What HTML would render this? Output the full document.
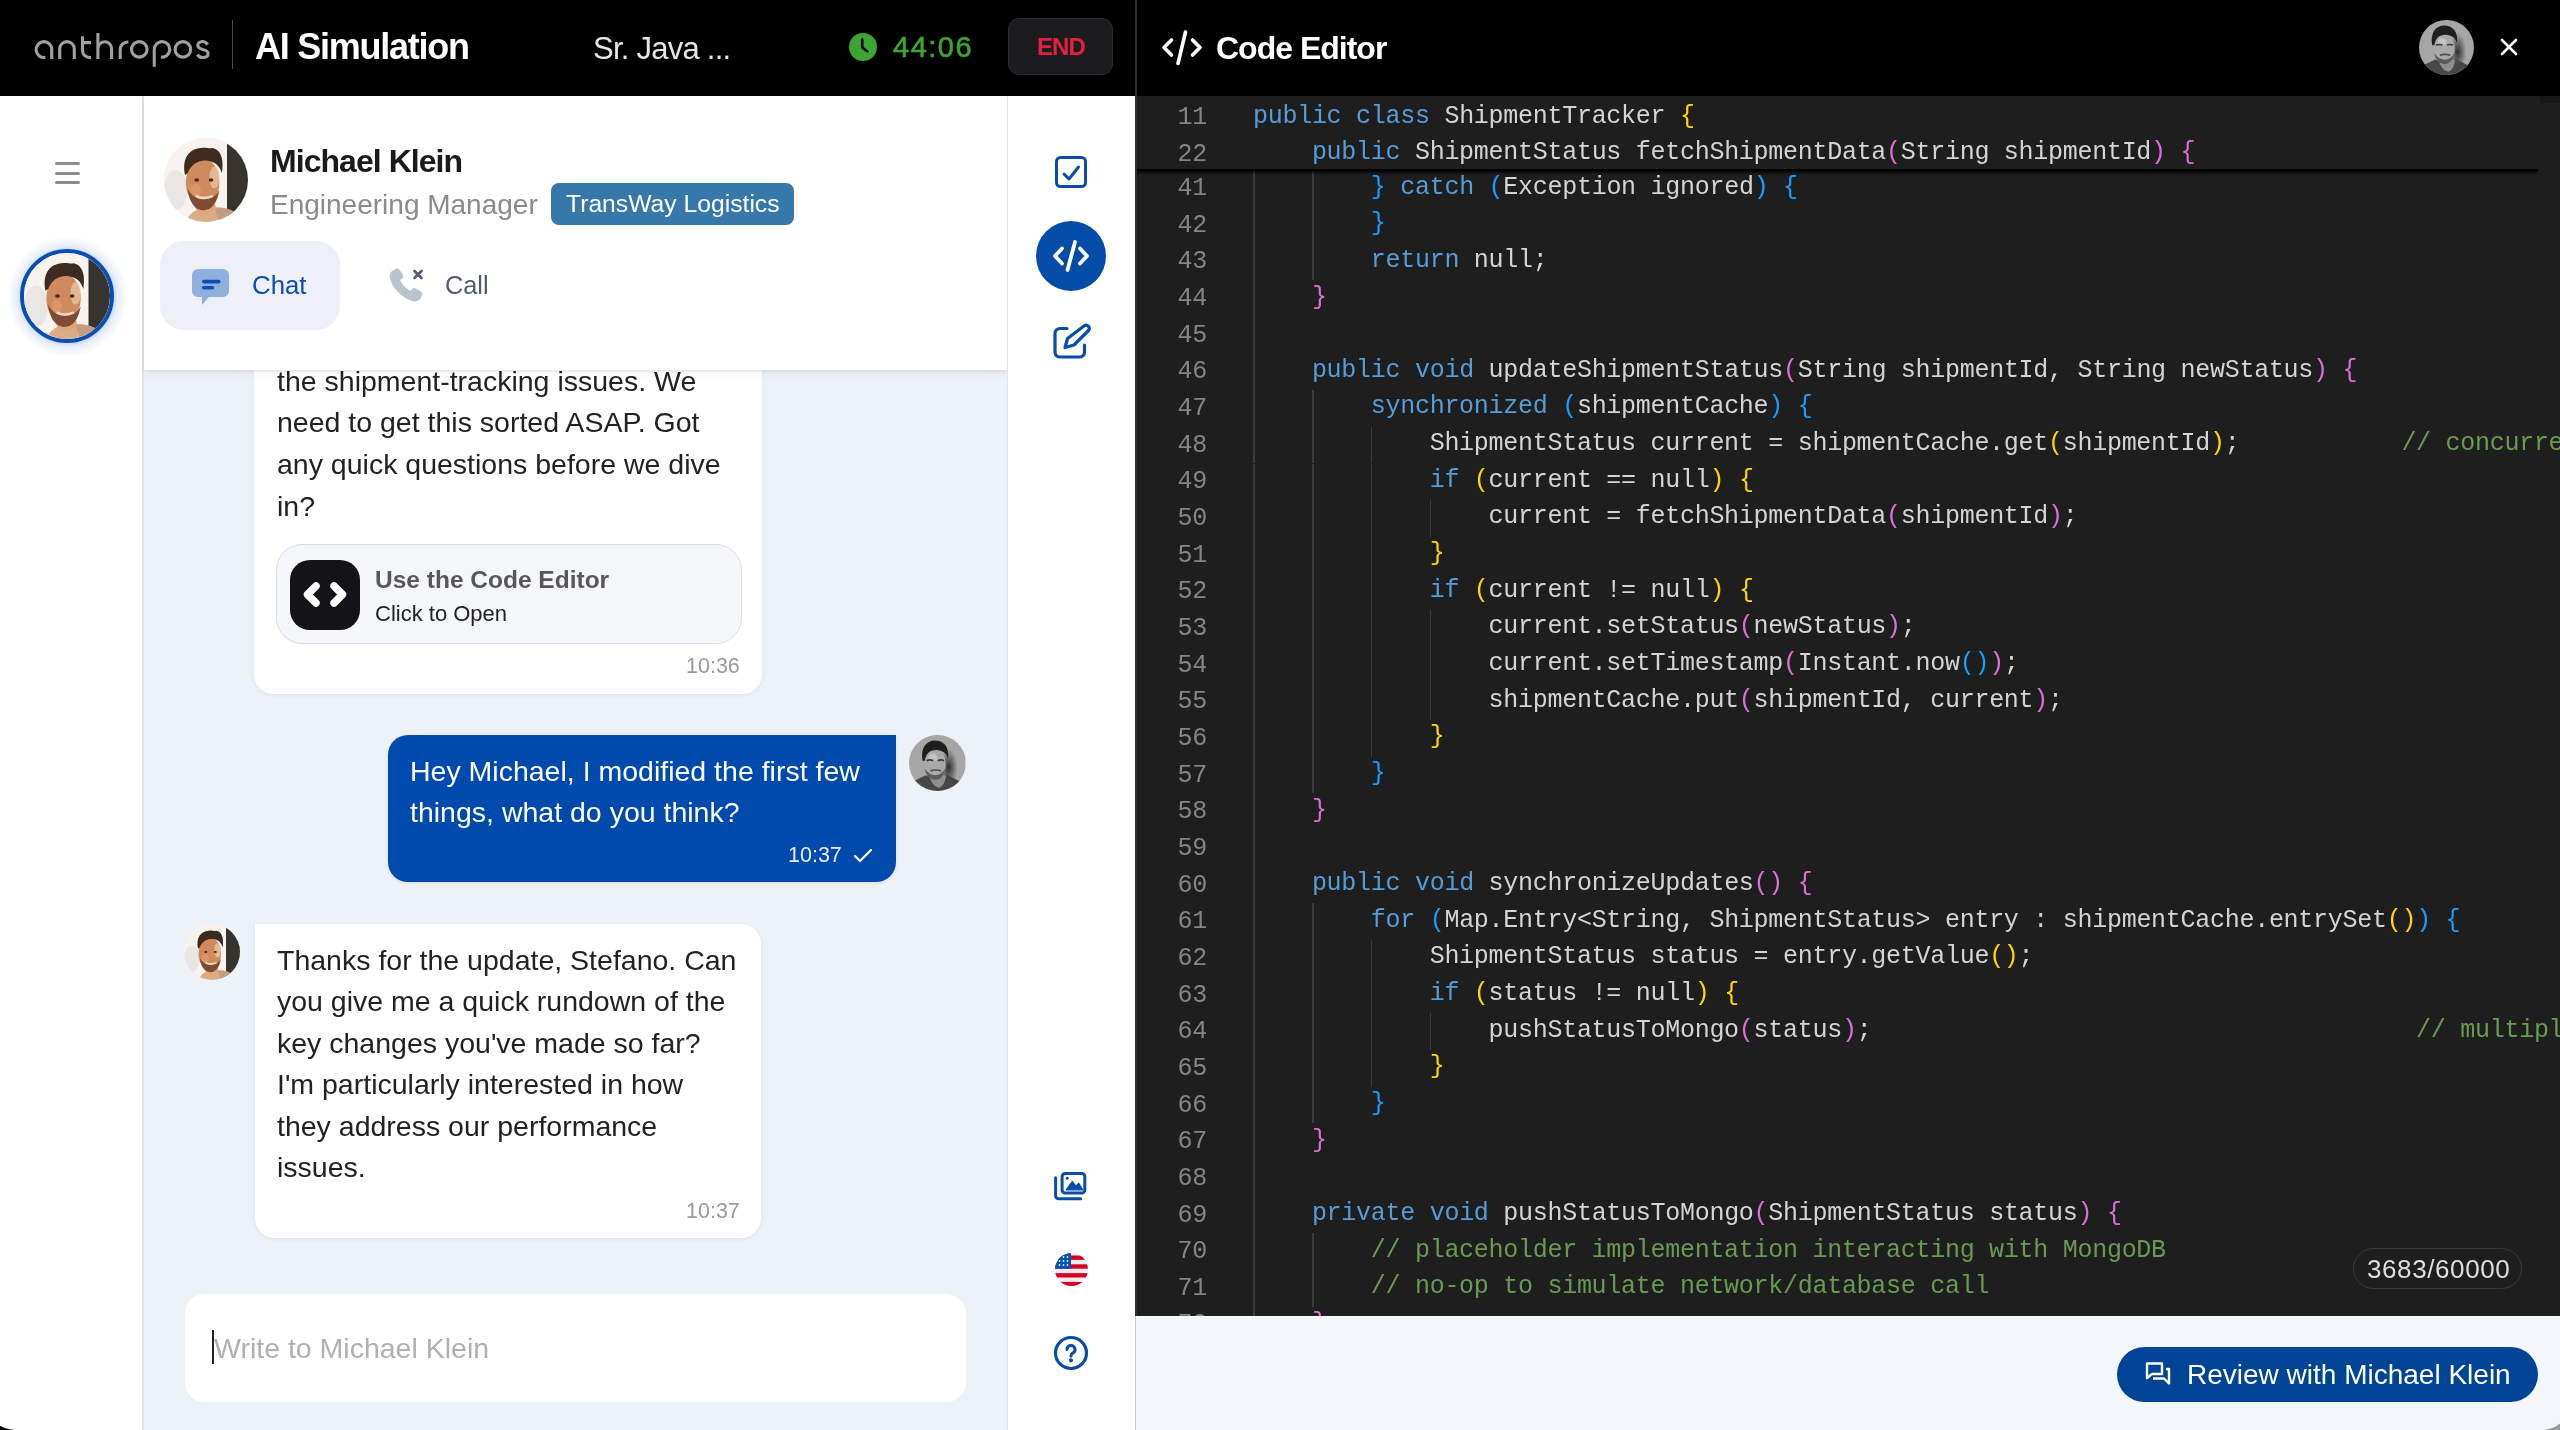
<!DOCTYPE html>
<html><head><meta charset="utf-8">
<style>
*{box-sizing:border-box;margin:0;padding:0}
html,body{width:2560px;height:1430px;overflow:hidden;background:#fff}
body{position:relative;font-family:"Liberation Sans",sans-serif;color:#222}
.a{position:absolute}
.t{position:absolute;line-height:1;white-space:nowrap;will-change:transform}
.b{font-weight:bold}
/* top bar */
#top{left:0;top:0;width:2560px;height:96px;background:#000}
/* left rail */
#rail{left:0;top:96px;width:142px;height:1334px;background:#fff}
#railb{left:142px;top:96px;width:2px;height:1334px;background:#e4e4e4}
/* chat column */
#chatbg{left:144px;top:96px;width:863px;height:1334px;background:#edf1f8}
#hdr{left:144px;top:96px;width:863px;height:274px;background:#fff;box-shadow:0 2px 3px rgba(0,0,0,0.07),0 5px 8px rgba(0,0,0,0.035)}
#rrail{left:1007px;top:96px;width:128px;height:1334px;background:#fff;border-left:1px solid #dfe2e6}
/* editor */
#ed{left:1137px;top:96px;width:1423px;height:1220px;background:#1e1e1e;overflow:hidden}
#edbar{left:1135px;top:1316px;width:1425px;height:114px;background:#f3f6fa;border-left:1.5px solid #c4c7cb;border-top:1px solid #fbfcfd}
#eddiv{left:1135px;top:0;width:2px;height:1316px;background:#2e2e2e}
.ln{position:absolute;left:0;width:70px;text-align:right;font-family:"Liberation Mono",monospace;font-size:25px;line-height:36.66px;color:#858585;letter-spacing:-0.28px;white-space:pre}
.cl{position:absolute;left:116px;font-family:"Liberation Mono",monospace;font-size:25px;line-height:36.66px;color:#d4d4d4;letter-spacing:-0.28px;white-space:pre}
.cl i{font-style:normal}
.cl,.ln{will-change:transform}
.k{color:#569cd6}
.c{color:#6a9955}
.g{position:absolute;width:1.4px;height:36.66px;background:#3b3b3b}
#sticky{position:absolute;left:0;top:0;width:1401px;height:72.7px;background:#1e1e1e}
#stsh{position:absolute;left:0;top:72.7px;width:1401px;height:6px;background:linear-gradient(180deg,rgba(0,0,0,0.95) 0,rgba(0,0,0,0.8) 35%,rgba(0,0,0,0.25) 70%,rgba(0,0,0,0) 100%)}
.bubble{position:absolute;background:#fff;border-radius:20px;box-shadow:0 1px 4px rgba(30,40,70,0.075)}
</style></head><body>

<!-- ================= TOP BAR ================= -->
<div id="top" class="a"></div>
<svg class="a" style="left:0;top:0" width="230" height="80" viewBox="0 0 230 80" fill="none" stroke="#a0a0a0" stroke-width="3.1">
  <path d="M51.7 48.5 V59 M51.9 49.5 A7.9 7.9 0 1 0 45.4 57.3"/>
  <path d="M59.7 59 V48.9 A7.3 7.3 0 0 1 74.3 48.9 V59"/>
  <path d="M82.5 36.3 V50.5 A7 7 0 0 0 89.5 57.45 H91 M81 42.65 H91"/>
  <path d="M97.9 33 V59 M97.9 48.6 A6.85 6.85 0 0 1 111.6 48.6 V59"/>
  <path d="M120.2 59 V49.5 A7.5 7.5 0 0 1 127.7 42 H128.4"/>
  <circle cx="139.3" cy="49.4" r="7.75"/>
  <path d="M154.25 66.8 V49.4 A7.75 7.75 0 1 1 160.9 57.05"/>
  <circle cx="182.9" cy="49.4" r="7.75"/>
  <path d="M207.6 44.6 C206.3 42.6 204.5 41.55 202.6 41.55 C199.6 41.55 197.8 43.3 197.8 45.6 C197.8 48 200 48.8 202.8 49.5 C206 50.2 208.1 51.3 208.1 53.7 C208.1 56.1 206 57.45 202.8 57.45 C200.3 57.45 198.4 56.3 197.4 54.6"/>
</svg>
<div class="a" style="left:231.5px;top:20px;width:1.5px;height:49px;background:#4a4a4a"></div>
<div class="t " style="left:255.00px;top:29.20px;font-size:36px;color:#fff;font-weight:bold;letter-spacing:-1.25px">AI Simulation</div>
<div class="t " style="left:592.50px;top:32.50px;font-size:31px;color:#e6e6e6;letter-spacing:-0.75px">Sr. Java ...</div>
<svg class="a" style="left:849px;top:33px" width="28" height="28" viewBox="0 0 28 28"><circle cx="14" cy="14" r="14" fill="#3da532"/><path d="M13.2 6.5 V14.5 L18.5 18.5" stroke="#000" stroke-width="2.6" fill="none" stroke-linecap="round" stroke-linejoin="round"/></svg>
<div class="t " style="left:893.00px;top:33.00px;font-size:29px;color:#3da532;letter-spacing:1.5px;-webkit-text-stroke:0.6px #3da532">44:06</div>
<div class="a" style="left:1008px;top:18px;width:105px;height:57px;border-radius:11px;background:#1c1c1e;border:1px solid #2c2c30"></div>
<div class="t " style="left:1037.00px;top:35.30px;font-size:24px;color:#e3213f;font-weight:bold;letter-spacing:-0.9px">END</div>
<div id="eddiv" class="a"></div>
<svg class="a" style="left:1160px;top:28px" width="44" height="40" viewBox="0 0 44 40" fill="none" stroke="#fff" stroke-width="3.6" stroke-linecap="round" stroke-linejoin="round">
  <path d="M11.5 12 L4 19.5 L11.5 27"/><path d="M32.5 12 L40 19.5 L32.5 27"/><path d="M25.5 4 L18 35.5"/>
</svg>
<div class="t " style="left:1216.00px;top:31.50px;font-size:32px;color:#fff;font-weight:bold;letter-spacing:-1.0px">Code Editor</div>
<!-- user avatar top right -->
<div class="a" style="left:2419px;top:19.5px;width:55px;height:55px;border-radius:50%;overflow:hidden"><svg class="a" style="left:0;top:0" width="100%" height="100%" viewBox="0 0 100 100" preserveAspectRatio="none">
<defs><radialGradient id="sh" cx="0.5" cy="0.5" r="0.5"><stop offset="0" stop-color="#2e2e2e"/><stop offset="1" stop-color="#2e2e2e" stop-opacity="0"/></radialGradient></defs>
<rect width="100" height="100" fill="#a6a6a6"/>
<ellipse cx="70" cy="58" rx="16" ry="34" fill="url(#sh)"/>
<path d="M8 82 L30 72 C40 78 56 78 66 70 L92 84 V100 H8 Z" fill="#474747"/>
<path d="M36 74 C40 88 48 94 54 94 C60 92 64 84 66 72 Z" fill="#8e8e8e"/>
<ellipse cx="46" cy="52" rx="19" ry="27" fill="#a9a9a9"/>
<ellipse cx="42" cy="40" rx="8" ry="7" fill="#c4c4c4"/>
<path d="M28 60 C30 74 38 80 47 80 C56 80 62 72 64 60 C60 68 54 72 47 72 C39 72 32 67 28 60 Z" fill="#5c5c5c"/>
<path d="M24 46 C20 24 30 10 46 10 C60 10 72 20 69 42 C66 32 60 28 48 27 C36 27 30 34 28 46 Z" fill="#1f1f1f"/>
<path d="M31 46 Q37 43 43 46" stroke="#3a3a3a" stroke-width="3" fill="none"/>
<path d="M51 46 Q56 43 62 46" stroke="#3a3a3a" stroke-width="3" fill="none"/>
<path d="M38 64 Q47 61 57 64" stroke="#505050" stroke-width="3" fill="none"/>
</svg></div>
<svg class="a" style="left:2499px;top:37px" width="20" height="20" viewBox="0 0 20 20" stroke="#fff" stroke-width="2.6" stroke-linecap="round"><path d="M3 3 L17 17 M17 3 L3 17"/></svg>

<!-- ================= LEFT RAIL ================= -->
<div id="rail" class="a"></div>
<div id="railb" class="a"></div>
<div class="a" style="left:55px;top:162px;width:25px;height:3px;border-radius:2px;background:#8c8c8c"></div>
<div class="a" style="left:55px;top:171.5px;width:25px;height:3px;border-radius:2px;background:#8c8c8c"></div>
<div class="a" style="left:55px;top:181px;width:25px;height:3px;border-radius:2px;background:#8c8c8c"></div>
<div class="a" style="left:8px;top:236.5px;width:119px;height:119px;border-radius:50%;background:radial-gradient(circle,rgba(30,90,190,0.25) 46px,rgba(30,90,190,0.11) 50px,rgba(30,90,190,0.05) 55px,rgba(30,90,190,0.025) 58.5px,rgba(30,90,190,0) 59.5px)"></div>
<div class="a" style="left:20px;top:249px;width:94px;height:94px;border-radius:50%;border:4.5px solid #0a4db3;overflow:hidden;background:#f0ece8" id="ravatar">
  <svg class="a" style="left:0;top:0" width="100%" height="100%" viewBox="0 0 100 100" preserveAspectRatio="none">
<rect width="100" height="100" fill="#f8f3ee"/>
<ellipse cx="14" cy="62" rx="14" ry="24" fill="#e9e6e3"/>
<path d="M75 0 H100 V100 H75 Z" fill="#37332e"/>
<path d="M26 100 C30 90 38 84 48 84 C62 82 76 80 92 94 L96 100 Z" fill="#d9ad8a"/>
<path d="M60 84 C70 82 80 84 92 94 L96 100 H66 Z" fill="#c29d82"/>
<path d="M36 80 C40 92 50 94 62 84 L60 76 H38 Z" fill="#e3a47a"/>
<ellipse cx="46" cy="53" rx="20" ry="29" fill="#cf8a5d"/>
<ellipse cx="60" cy="47" rx="6" ry="13" fill="#ecc4a4" opacity="0.75"/>
<ellipse cx="38" cy="62" rx="6" ry="8" fill="#e0a070" opacity="0.6"/>
<path d="M28 60 C30 78 38 86 47 86 C57 86 63 78 66 62 C62 70 55 73 47 73 C39 73 32 68 28 60 Z" fill="#7e4c33"/>
<path d="M38 69 Q47 74 58 69" stroke="#f0d8c4" stroke-width="3" fill="none"/>
<path d="M25 44 C21 24 30 13 44 12 C50 11 54 13 58 12 C66 14 72 22 69 42 C66 32 60 28 52 27 C42 26 33 30 28 42 Z" fill="#3d2b1f"/>
<ellipse cx="39" cy="50" rx="2.8" ry="2" fill="#4a2a1a"/>
<ellipse cx="56" cy="50" rx="2.8" ry="2" fill="#4a2a1a"/>
</svg>
</div>

<!-- ================= CHAT COLUMN ================= -->
<div id="chatbg" class="a"></div>

<!-- bubble 1 -->
<div class="bubble" style="left:254px;top:250px;width:508px;height:443.5px"></div>
<div class="t " style="left:276.50px;top:366.80px;font-size:28.5px;">the shipment-tracking issues. We</div>
<div class="t " style="left:276.50px;top:408.40px;font-size:28.5px;">need to get this sorted ASAP. Got</div>
<div class="t " style="left:276.50px;top:450.00px;font-size:28.5px;">any quick questions before we dive</div>
<div class="t " style="left:276.50px;top:491.50px;font-size:28.5px;">in?</div>
<div class="a" style="left:276px;top:544px;width:465.5px;height:100px;border-radius:26px;background:#f4f6fa;border:1px solid #dcdcdc"></div>
<div class="a" style="left:290px;top:560px;width:70px;height:70px;border-radius:20px;background:#131318"></div>
<svg class="a" style="left:290px;top:560px" width="70" height="70" viewBox="0 0 70 70" fill="none" stroke="#fff" stroke-width="7.5" stroke-linecap="round" stroke-linejoin="round"><path d="M26 26 L17.5 34.5 L26 43"/><path d="M44 26 L52.5 34.5 L44 43"/></svg>
<div class="t " style="left:375.00px;top:568.00px;font-size:24.5px;color:#585858;font-weight:bold">Use the Code Editor</div>
<div class="t " style="left:375.00px;top:603.00px;font-size:22px;color:#222">Click to Open</div>
<div class="t " style="right:1820.00px;top:656.00px;font-size:21.5px;color:#9a9a9a">10:36</div>

<!-- bubble 2 (user) -->
<div class="a" style="left:388px;top:735px;width:507.5px;height:146.5px;border-radius:20px 0 20px 20px;background:#004aad;box-shadow:0 1px 4px rgba(30,40,70,0.09)"></div>
<div class="t " style="left:410.00px;top:756.50px;font-size:28.5px;color:#fff">Hey Michael, I modified the first few</div>
<div class="t " style="left:410.00px;top:797.80px;font-size:28.5px;color:#fff">things, what do you think?</div>
<div class="t " style="right:1718.30px;top:845.10px;font-size:21.5px;color:#e8eef8">10:37</div>
<svg class="a" style="left:852px;top:847px" width="22" height="17" viewBox="0 0 22 17" fill="none" stroke="#fff" stroke-width="2.2" stroke-linecap="round" stroke-linejoin="round"><path d="M3 9 L8 14 L19 3"/></svg>
<div class="a" style="left:909px;top:735px;width:56.5px;height:56px;border-radius:50%;overflow:hidden"><svg class="a" style="left:0;top:0" width="100%" height="100%" viewBox="0 0 100 100" preserveAspectRatio="none">
<defs><radialGradient id="sh" cx="0.5" cy="0.5" r="0.5"><stop offset="0" stop-color="#2e2e2e"/><stop offset="1" stop-color="#2e2e2e" stop-opacity="0"/></radialGradient></defs>
<rect width="100" height="100" fill="#a6a6a6"/>
<ellipse cx="70" cy="58" rx="16" ry="34" fill="url(#sh)"/>
<path d="M8 82 L30 72 C40 78 56 78 66 70 L92 84 V100 H8 Z" fill="#474747"/>
<path d="M36 74 C40 88 48 94 54 94 C60 92 64 84 66 72 Z" fill="#8e8e8e"/>
<ellipse cx="46" cy="52" rx="19" ry="27" fill="#a9a9a9"/>
<ellipse cx="42" cy="40" rx="8" ry="7" fill="#c4c4c4"/>
<path d="M28 60 C30 74 38 80 47 80 C56 80 62 72 64 60 C60 68 54 72 47 72 C39 72 32 67 28 60 Z" fill="#5c5c5c"/>
<path d="M24 46 C20 24 30 10 46 10 C60 10 72 20 69 42 C66 32 60 28 48 27 C36 27 30 34 28 46 Z" fill="#1f1f1f"/>
<path d="M31 46 Q37 43 43 46" stroke="#3a3a3a" stroke-width="3" fill="none"/>
<path d="M51 46 Q56 43 62 46" stroke="#3a3a3a" stroke-width="3" fill="none"/>
<path d="M38 64 Q47 61 57 64" stroke="#505050" stroke-width="3" fill="none"/>
</svg></div>

<!-- bubble 3 -->
<div class="a" style="left:184px;top:923.5px;width:56px;height:56px;border-radius:50%;overflow:hidden;background:#f0ece8">
  <svg class="a" style="left:0;top:0" width="100%" height="100%" viewBox="0 0 100 100" preserveAspectRatio="none">
<rect width="100" height="100" fill="#f8f3ee"/>
<ellipse cx="14" cy="62" rx="14" ry="24" fill="#e9e6e3"/>
<path d="M75 0 H100 V100 H75 Z" fill="#37332e"/>
<path d="M26 100 C30 90 38 84 48 84 C62 82 76 80 92 94 L96 100 Z" fill="#d9ad8a"/>
<path d="M60 84 C70 82 80 84 92 94 L96 100 H66 Z" fill="#c29d82"/>
<path d="M36 80 C40 92 50 94 62 84 L60 76 H38 Z" fill="#e3a47a"/>
<ellipse cx="46" cy="53" rx="20" ry="29" fill="#cf8a5d"/>
<ellipse cx="60" cy="47" rx="6" ry="13" fill="#ecc4a4" opacity="0.75"/>
<ellipse cx="38" cy="62" rx="6" ry="8" fill="#e0a070" opacity="0.6"/>
<path d="M28 60 C30 78 38 86 47 86 C57 86 63 78 66 62 C62 70 55 73 47 73 C39 73 32 68 28 60 Z" fill="#7e4c33"/>
<path d="M38 69 Q47 74 58 69" stroke="#f0d8c4" stroke-width="3" fill="none"/>
<path d="M25 44 C21 24 30 13 44 12 C50 11 54 13 58 12 C66 14 72 22 69 42 C66 32 60 28 52 27 C42 26 33 30 28 42 Z" fill="#3d2b1f"/>
<ellipse cx="39" cy="50" rx="2.8" ry="2" fill="#4a2a1a"/>
<ellipse cx="56" cy="50" rx="2.8" ry="2" fill="#4a2a1a"/>
</svg>
</div>
<div class="bubble" style="left:254.5px;top:923.5px;width:506.5px;height:314.5px;border-radius:0 20px 20px 20px"></div>
<div class="t " style="left:276.50px;top:945.50px;font-size:28.5px;">Thanks for the update, Stefano. Can</div>
<div class="t " style="left:276.50px;top:987.10px;font-size:28.5px;">you give me a quick rundown of the</div>
<div class="t " style="left:276.50px;top:1028.60px;font-size:28.5px;">key changes you&#39;ve made so far?</div>
<div class="t " style="left:276.50px;top:1070.20px;font-size:28.5px;">I&#39;m particularly interested in how</div>
<div class="t " style="left:276.50px;top:1111.80px;font-size:28.5px;">they address our performance</div>
<div class="t " style="left:276.50px;top:1153.30px;font-size:28.5px;">issues.</div>
<div class="t " style="right:1820.40px;top:1201.40px;font-size:21.5px;color:#9a9a9a">10:37</div>

<!-- input -->
<div class="a" style="left:185px;top:1294px;width:780.5px;height:107.5px;border-radius:20px;background:#fff"></div>
<div class="a" style="left:212px;top:1330px;width:2px;height:34px;background:#222"></div>
<div class="t " style="left:214.00px;top:1334.40px;font-size:28.5px;color:#b0b0b0">Write to Michael Klein</div>

<!-- header (drawn after bubbles so it covers bubble 1 top) -->
<div id="hdr" class="a"></div>
<div class="a" style="left:164px;top:138px;width:84px;height:84px;border-radius:50%;overflow:hidden;background:#f0ece8">
  <svg class="a" style="left:0;top:0" width="100%" height="100%" viewBox="0 0 100 100" preserveAspectRatio="none">
<rect width="100" height="100" fill="#f8f3ee"/>
<ellipse cx="14" cy="62" rx="14" ry="24" fill="#e9e6e3"/>
<path d="M75 0 H100 V100 H75 Z" fill="#37332e"/>
<path d="M26 100 C30 90 38 84 48 84 C62 82 76 80 92 94 L96 100 Z" fill="#d9ad8a"/>
<path d="M60 84 C70 82 80 84 92 94 L96 100 H66 Z" fill="#c29d82"/>
<path d="M36 80 C40 92 50 94 62 84 L60 76 H38 Z" fill="#e3a47a"/>
<ellipse cx="46" cy="53" rx="20" ry="29" fill="#cf8a5d"/>
<ellipse cx="60" cy="47" rx="6" ry="13" fill="#ecc4a4" opacity="0.75"/>
<ellipse cx="38" cy="62" rx="6" ry="8" fill="#e0a070" opacity="0.6"/>
<path d="M28 60 C30 78 38 86 47 86 C57 86 63 78 66 62 C62 70 55 73 47 73 C39 73 32 68 28 60 Z" fill="#7e4c33"/>
<path d="M38 69 Q47 74 58 69" stroke="#f0d8c4" stroke-width="3" fill="none"/>
<path d="M25 44 C21 24 30 13 44 12 C50 11 54 13 58 12 C66 14 72 22 69 42 C66 32 60 28 52 27 C42 26 33 30 28 42 Z" fill="#3d2b1f"/>
<ellipse cx="39" cy="50" rx="2.8" ry="2" fill="#4a2a1a"/>
<ellipse cx="56" cy="50" rx="2.8" ry="2" fill="#4a2a1a"/>
</svg>
</div>
<div class="t " style="left:269.50px;top:145.00px;font-size:32px;color:#1a1a1a;font-weight:bold;letter-spacing:-0.95px">Michael Klein</div>
<div class="t " style="left:270.00px;top:191.40px;font-size:28px;color:#8a8a8a">Engineering Manager</div>
<div class="a" style="left:551px;top:183px;width:243px;height:42px;border-radius:8px;background:#3778aa"></div>
<div class="t " style="left:565.50px;top:192.40px;font-size:24.7px;color:#fff">TransWay Logistics</div>
<div class="a" style="left:160px;top:241px;width:180px;height:89px;border-radius:24px;background:#edf0f7"></div>
<svg class="a" style="left:192px;top:268px" width="38" height="38" viewBox="0 0 38 38">
  <path d="M6 1 H31 a6 6 0 0 1 6 6 V23 a6 6 0 0 1 -6 6 H17 L10 37 V29 H6 a6 6 0 0 1 -6 -6 V7 a6 6 0 0 1 6 -6 Z" fill="#8fb0dc"/>
  <path d="M11.8 13.6 H26.8 M11.8 19.7 H20.3" stroke="#0b4db3" stroke-width="3.6" stroke-linecap="round"/>
</svg>
<div class="t " style="left:252.00px;top:272.50px;font-size:25.8px;color:#0b4db3">Chat</div>
<svg class="a" style="left:386px;top:266px" width="40" height="40" viewBox="0 0 40 40">
  <path d="M8 4 C5 5 3 8 4 12 C6 22 15 31 26 35 C30 36 33 35 35 32 L36 29 C36.5 27.5 36 26.5 34.5 25.5 L30 22.5 C28.5 21.5 27 21.8 26 23 L24.5 25 C19.5 22.5 16 18.5 14 14 L16 12.5 C17.3 11.5 17.5 10 16.7 8.6 L13.5 4 C12.6 2.6 11 2.2 9.6 2.8 Z" fill="#b9c2cd"/>
  <path d="M28.5 5 L35.5 12 M35.5 5 L28.5 12" stroke="#4f5b6b" stroke-width="2.6" stroke-linecap="round"/>
</svg>
<div class="t " style="left:444.50px;top:272.50px;font-size:25.3px;color:#505c6c">Call</div>

<!-- ================= RIGHT RAIL ================= -->
<div id="rrail" class="a"></div>
<svg class="a" style="left:1054px;top:155px" width="34" height="34" viewBox="0 0 34 34" fill="none" stroke="#0a4ca8" stroke-width="3" stroke-linecap="round" stroke-linejoin="round">
  <rect x="2.5" y="2.5" width="29" height="29" rx="4"/><path d="M10 19 L15 24 L24.5 12"/>
</svg>
<div class="a" style="left:1036px;top:221px;width:70px;height:70px;border-radius:50%;background:#054ca9"></div>
<svg class="a" style="left:1036px;top:221px" width="70" height="70" viewBox="0 0 70 70" fill="none" stroke="#fff" stroke-width="3.8" stroke-linecap="round" stroke-linejoin="round">
  <path d="M26 27.5 L19 35 L26 42.5"/><path d="M44 27.5 L51 35 L44 42.5"/><path d="M39 21 L31.5 49"/>
</svg>
<svg class="a" style="left:1052px;top:322px" width="40" height="40" viewBox="0 0 40 40" fill="none" stroke="#0a4ca8" stroke-width="3.2" stroke-linecap="round" stroke-linejoin="round">
  <path d="M15 6.5 H8 a5 5 0 0 0 -5 5 V30 a5 5 0 0 0 5 5 H27.5 a5 5 0 0 0 5 -5 V23"/>
  <path d="M32 4 a3.2 3.2 0 0 1 4.5 4.5 L22 23 L13 25.5 L15.5 16.5 Z"/>
</svg>
<svg class="a" style="left:1052px;top:1169px" width="38" height="34" viewBox="0 0 38 34" fill="none" stroke="#0a4ca8" stroke-width="3" stroke-linecap="round" stroke-linejoin="round">
  <rect x="10.1" y="4.5" width="22.7" height="19.6" rx="3"/>
  <path d="M3.6 8.7 V26.7 a3 3 0 0 0 3 3 H28.7"/>
  <path d="M14.2 20.8 L20.2 12.5 L24 17.2 L26.8 14.2 L30.6 20.8 Z" fill="#0a4ca8" stroke-width="1.2"/>
  <circle cx="15.2" cy="9.2" r="1.5" fill="#0a4ca8" stroke="none"/>
</svg>
<svg class="a" style="left:1055px;top:1252.5px" width="33" height="33" viewBox="0 0 33 33">
  <defs><clipPath id="fc"><circle cx="16.5" cy="16.5" r="16.5"/></clipPath></defs>
  <g clip-path="url(#fc)">
    <rect width="33" height="33" fill="#eeeeee"/>
    <rect y="2.5" width="33" height="4.4" fill="#d80027"/>
    <rect y="11.3" width="33" height="4.4" fill="#d80027"/>
    <rect y="20.1" width="33" height="4.4" fill="#d80027"/>
    <rect y="28.9" width="33" height="4.4" fill="#d80027"/>
    <rect width="16" height="15.7" fill="#0052b4"/>
    <g fill="#eee"><circle cx="4.5" cy="4" r="0.9"/><circle cx="8.5" cy="4" r="0.9"/><circle cx="12.5" cy="4" r="0.9"/><circle cx="4.5" cy="8" r="0.9"/><circle cx="8.5" cy="8" r="0.9"/><circle cx="12.5" cy="8" r="0.9"/><circle cx="4.5" cy="12" r="0.9"/><circle cx="8.5" cy="12" r="0.9"/><circle cx="12.5" cy="12" r="0.9"/></g>
  </g>
</svg>
<svg class="a" style="left:1052px;top:1334px" width="38" height="38" viewBox="0 0 38 38" fill="none" stroke="#0a4ca8" stroke-width="3.2" stroke-linecap="round">
  <circle cx="19" cy="19" r="15.5"/>
  <path d="M15 15.5 a4 4 0 1 1 5.8 3.6 c-1.3 0.7 -1.8 1.5 -1.8 2.9" stroke-width="3"/>
  <circle cx="19" cy="26.3" r="1.1" fill="#0a4ca8" stroke-width="2"/>
</svg>

<!-- ================= EDITOR ================= -->
<div id="ed" class="a">
<div class="ln" style="top:75.02px">41</div><div class="cl" style="top:73.52px">        <i style="color:#179fff">}</i> <i class="k">catch</i> <i style="color:#179fff">(</i>Exception ignored<i style="color:#179fff">)</i> <i style="color:#179fff">{</i></div>
<div class="g" style="left:116.30px;top:74.22px"></div>
<div class="g" style="left:175.18px;top:74.22px"></div>
<div class="ln" style="top:111.68px">42</div><div class="cl" style="top:110.18px">        <i style="color:#179fff">}</i></div>
<div class="g" style="left:116.30px;top:110.88px"></div>
<div class="g" style="left:175.18px;top:110.88px"></div>
<div class="ln" style="top:148.34px">43</div><div class="cl" style="top:146.84px">        <i class="k">return</i> null;</div>
<div class="g" style="left:116.30px;top:147.54px"></div>
<div class="g" style="left:175.18px;top:147.54px"></div>
<div class="ln" style="top:185.00px">44</div><div class="cl" style="top:183.50px">    <i style="color:#da70d6">}</i></div>
<div class="g" style="left:116.30px;top:184.20px"></div>
<div class="ln" style="top:221.66px">45</div><div class="cl" style="top:220.16px"></div>
<div class="g" style="left:116.30px;top:220.86px"></div>
<div class="ln" style="top:258.32px">46</div><div class="cl" style="top:256.82px">    <i class="k">public</i> <i class="k">void</i> updateShipmentStatus<i style="color:#da70d6">(</i>String shipmentId, String newStatus<i style="color:#da70d6">)</i> <i style="color:#da70d6">{</i></div>
<div class="g" style="left:116.30px;top:257.52px"></div>
<div class="ln" style="top:294.98px">47</div><div class="cl" style="top:293.48px">        <i class="k">synchronized</i> <i style="color:#179fff">(</i>shipmentCache<i style="color:#179fff">)</i> <i style="color:#179fff">{</i></div>
<div class="g" style="left:116.30px;top:294.18px"></div>
<div class="g" style="left:175.18px;top:294.18px"></div>
<div class="ln" style="top:331.64px">48</div><div class="cl" style="top:330.14px">            ShipmentStatus current = shipmentCache.get<i style="color:#ffd700">(</i>shipmentId<i style="color:#ffd700">)</i>;           <i class="c">// concurrent</i></div>
<div class="g" style="left:116.30px;top:330.84px"></div>
<div class="g" style="left:175.18px;top:330.84px"></div>
<div class="g" style="left:234.06px;top:330.84px"></div>
<div class="ln" style="top:368.30px">49</div><div class="cl" style="top:366.80px">            <i class="k">if</i> <i style="color:#ffd700">(</i>current == null<i style="color:#ffd700">)</i> <i style="color:#ffd700">{</i></div>
<div class="g" style="left:116.30px;top:367.50px"></div>
<div class="g" style="left:175.18px;top:367.50px"></div>
<div class="g" style="left:234.06px;top:367.50px"></div>
<div class="ln" style="top:404.96px">50</div><div class="cl" style="top:403.46px">                current = fetchShipmentData<i style="color:#da70d6">(</i>shipmentId<i style="color:#da70d6">)</i>;</div>
<div class="g" style="left:116.30px;top:404.16px"></div>
<div class="g" style="left:175.18px;top:404.16px"></div>
<div class="g" style="left:234.06px;top:404.16px"></div>
<div class="g" style="left:292.94px;top:404.16px"></div>
<div class="ln" style="top:441.62px">51</div><div class="cl" style="top:440.12px">            <i style="color:#ffd700">}</i></div>
<div class="g" style="left:116.30px;top:440.82px"></div>
<div class="g" style="left:175.18px;top:440.82px"></div>
<div class="g" style="left:234.06px;top:440.82px"></div>
<div class="ln" style="top:478.28px">52</div><div class="cl" style="top:476.78px">            <i class="k">if</i> <i style="color:#ffd700">(</i>current != null<i style="color:#ffd700">)</i> <i style="color:#ffd700">{</i></div>
<div class="g" style="left:116.30px;top:477.48px"></div>
<div class="g" style="left:175.18px;top:477.48px"></div>
<div class="g" style="left:234.06px;top:477.48px"></div>
<div class="ln" style="top:514.94px">53</div><div class="cl" style="top:513.44px">                current.setStatus<i style="color:#da70d6">(</i>newStatus<i style="color:#da70d6">)</i>;</div>
<div class="g" style="left:116.30px;top:514.14px"></div>
<div class="g" style="left:175.18px;top:514.14px"></div>
<div class="g" style="left:234.06px;top:514.14px"></div>
<div class="g" style="left:292.94px;top:514.14px"></div>
<div class="ln" style="top:551.60px">54</div><div class="cl" style="top:550.10px">                current.setTimestamp<i style="color:#da70d6">(</i>Instant.now<i style="color:#179fff">(</i><i style="color:#179fff">)</i><i style="color:#da70d6">)</i>;</div>
<div class="g" style="left:116.30px;top:550.80px"></div>
<div class="g" style="left:175.18px;top:550.80px"></div>
<div class="g" style="left:234.06px;top:550.80px"></div>
<div class="g" style="left:292.94px;top:550.80px"></div>
<div class="ln" style="top:588.26px">55</div><div class="cl" style="top:586.76px">                shipmentCache.put<i style="color:#da70d6">(</i>shipmentId, current<i style="color:#da70d6">)</i>;</div>
<div class="g" style="left:116.30px;top:587.46px"></div>
<div class="g" style="left:175.18px;top:587.46px"></div>
<div class="g" style="left:234.06px;top:587.46px"></div>
<div class="g" style="left:292.94px;top:587.46px"></div>
<div class="ln" style="top:624.92px">56</div><div class="cl" style="top:623.42px">            <i style="color:#ffd700">}</i></div>
<div class="g" style="left:116.30px;top:624.12px"></div>
<div class="g" style="left:175.18px;top:624.12px"></div>
<div class="g" style="left:234.06px;top:624.12px"></div>
<div class="ln" style="top:661.58px">57</div><div class="cl" style="top:660.08px">        <i style="color:#179fff">}</i></div>
<div class="g" style="left:116.30px;top:660.78px"></div>
<div class="g" style="left:175.18px;top:660.78px"></div>
<div class="ln" style="top:698.24px">58</div><div class="cl" style="top:696.74px">    <i style="color:#da70d6">}</i></div>
<div class="g" style="left:116.30px;top:697.44px"></div>
<div class="ln" style="top:734.90px">59</div><div class="cl" style="top:733.40px"></div>
<div class="g" style="left:116.30px;top:734.10px"></div>
<div class="ln" style="top:771.56px">60</div><div class="cl" style="top:770.06px">    <i class="k">public</i> <i class="k">void</i> synchronizeUpdates<i style="color:#da70d6">(</i><i style="color:#da70d6">)</i> <i style="color:#da70d6">{</i></div>
<div class="g" style="left:116.30px;top:770.76px"></div>
<div class="ln" style="top:808.22px">61</div><div class="cl" style="top:806.72px">        <i class="k">for</i> <i style="color:#179fff">(</i>Map.Entry&lt;String, ShipmentStatus&gt; entry : shipmentCache.entrySet<i style="color:#ffd700">(</i><i style="color:#ffd700">)</i><i style="color:#179fff">)</i> <i style="color:#179fff">{</i></div>
<div class="g" style="left:116.30px;top:807.42px"></div>
<div class="g" style="left:175.18px;top:807.42px"></div>
<div class="ln" style="top:844.88px">62</div><div class="cl" style="top:843.38px">            ShipmentStatus status = entry.getValue<i style="color:#ffd700">(</i><i style="color:#ffd700">)</i>;</div>
<div class="g" style="left:116.30px;top:844.08px"></div>
<div class="g" style="left:175.18px;top:844.08px"></div>
<div class="g" style="left:234.06px;top:844.08px"></div>
<div class="ln" style="top:881.54px">63</div><div class="cl" style="top:880.04px">            <i class="k">if</i> <i style="color:#ffd700">(</i>status != null<i style="color:#ffd700">)</i> <i style="color:#ffd700">{</i></div>
<div class="g" style="left:116.30px;top:880.74px"></div>
<div class="g" style="left:175.18px;top:880.74px"></div>
<div class="g" style="left:234.06px;top:880.74px"></div>
<div class="ln" style="top:918.20px">64</div><div class="cl" style="top:916.70px">                pushStatusToMongo<i style="color:#da70d6">(</i>status<i style="color:#da70d6">)</i>;                                     <i class="c">// multiple</i></div>
<div class="g" style="left:116.30px;top:917.40px"></div>
<div class="g" style="left:175.18px;top:917.40px"></div>
<div class="g" style="left:234.06px;top:917.40px"></div>
<div class="g" style="left:292.94px;top:917.40px"></div>
<div class="ln" style="top:954.86px">65</div><div class="cl" style="top:953.36px">            <i style="color:#ffd700">}</i></div>
<div class="g" style="left:116.30px;top:954.06px"></div>
<div class="g" style="left:175.18px;top:954.06px"></div>
<div class="g" style="left:234.06px;top:954.06px"></div>
<div class="ln" style="top:991.52px">66</div><div class="cl" style="top:990.02px">        <i style="color:#179fff">}</i></div>
<div class="g" style="left:116.30px;top:990.72px"></div>
<div class="g" style="left:175.18px;top:990.72px"></div>
<div class="ln" style="top:1028.18px">67</div><div class="cl" style="top:1026.68px">    <i style="color:#da70d6">}</i></div>
<div class="g" style="left:116.30px;top:1027.38px"></div>
<div class="ln" style="top:1064.84px">68</div><div class="cl" style="top:1063.34px"></div>
<div class="g" style="left:116.30px;top:1064.04px"></div>
<div class="ln" style="top:1101.50px">69</div><div class="cl" style="top:1100.00px">    <i class="k">private</i> <i class="k">void</i> pushStatusToMongo<i style="color:#da70d6">(</i>ShipmentStatus status<i style="color:#da70d6">)</i> <i style="color:#da70d6">{</i></div>
<div class="g" style="left:116.30px;top:1100.70px"></div>
<div class="ln" style="top:1138.16px">70</div><div class="cl" style="top:1136.66px">        <i class="c">// placeholder implementation interacting with MongoDB</i></div>
<div class="g" style="left:116.30px;top:1137.36px"></div>
<div class="g" style="left:175.18px;top:1137.36px"></div>
<div class="ln" style="top:1174.82px">71</div><div class="cl" style="top:1173.32px">        <i class="c">// no-op to simulate network/database call</i></div>
<div class="g" style="left:116.30px;top:1174.02px"></div>
<div class="g" style="left:175.18px;top:1174.02px"></div>
<div class="ln" style="top:1211.48px">72</div><div class="cl" style="top:1209.98px">    <i style="color:#da70d6">}</i></div>
<div class="g" style="left:116.30px;top:1210.68px"></div>
<div id="sticky">
<div class="ln" style="top:4.02px">11</div><div class="cl" style="top:2.52px"><i class="k">public</i> <i class="k">class</i> ShipmentTracker <i style="color:#ffd700">{</i></div>
<div class="ln" style="top:40.68px">22</div><div class="cl" style="top:39.18px">    <i class="k">public</i> ShipmentStatus fetchShipmentData<i style="color:#da70d6">(</i>String shipmentId<i style="color:#da70d6">)</i> <i style="color:#da70d6">{</i></div>
</div>
<div id="stsh"></div>
<div class="a" style="left:1403px;top:0;width:20px;height:6.6px;background:#171717"></div>
</div>
<div id="edbar" class="a"></div>
<div class="a" style="left:2353px;top:1248px;width:169px;height:41px;border-radius:21px;border:1px solid #3a3a3a;background:#1e1e1e"></div>
<div class="t " style="left:2367.00px;top:1256.20px;font-size:26px;color:#dedede;letter-spacing:0.6px">3683/60000</div>
<div class="a" style="left:2117px;top:1347px;width:420.5px;height:54.5px;border-radius:28px;background:#004595"></div>
<svg class="a" style="left:2144px;top:1360px" width="28" height="28" viewBox="0 0 28 28" fill="none" stroke="#fff" stroke-width="2.4" stroke-linejoin="round">
  <path d="M3 3.5 H18 V14 H8 L3 18 Z"/><path d="M9 18.5 H20 L25 23.5 V9 H22"/>
</svg>
<div class="t " style="left:2186.50px;top:1361.20px;font-size:28px;color:#fff">Review with Michael Klein</div>

<svg class="a" style="left:0;top:1420px" width="20" height="10" viewBox="0 1420 20 10"><path d="M0 1425.7 Q5 1429.2 15.5 1430 L0 1430 Z" fill="#000"/></svg>
<svg class="a" style="left:2540px;top:1420px" width="20" height="10" viewBox="2540 1420 20 10"><path d="M2544 1430 Q2554 1428.5 2560 1423.5 L2560 1430 Z" fill="#9a9a9a"/></svg>
</body></html>
